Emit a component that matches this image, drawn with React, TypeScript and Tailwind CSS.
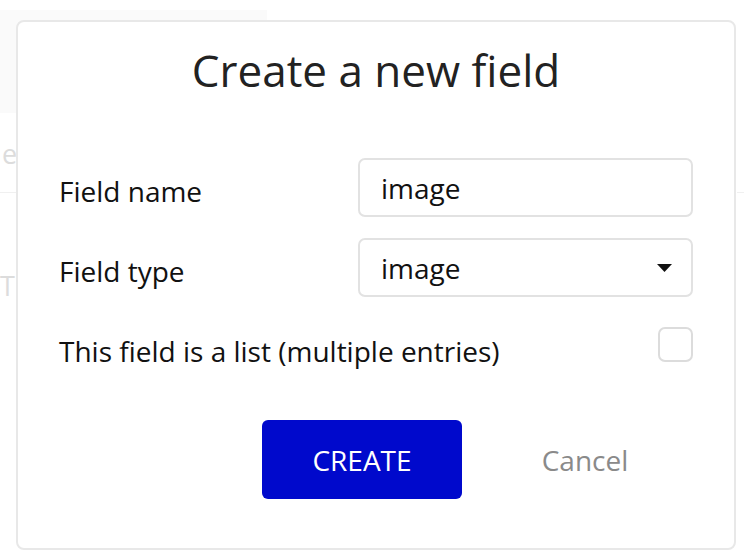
import React from "react";

export default function App() {
  return (
    <div className="relative w-[744px] h-[558px] overflow-hidden bg-white" style={{ fontFamily: '"Open Sans", sans-serif' }}>
      {/* faint background page */}
      <div className="absolute left-0 top-[10px] w-[267px] h-[103px] bg-[#fafafa]" />
      <div className="absolute left-[2px] top-[140px] text-[27px] leading-none text-[#dcdcdc]">e</div>
      <div className="absolute left-0 top-[192px] w-[16px] h-px bg-[#f0f0f0]" />
      <div className="absolute left-[737px] top-[192px] w-[8px] h-px bg-[#f0f0f0]" />
      <div className="absolute left-0 top-[272px] text-[27px] leading-none text-[#dcdcdc]">T</div>

      {/* dialog */}
      <div className="absolute left-[16px] top-[20px] w-[720px] h-[530px] rounded-[8px] border-2 border-[#e8e8e8] bg-white flex flex-col px-[41px]">
        <h1 className="pt-[26px] text-center text-[44px] leading-none text-[#222] font-normal">Create a new field</h1>

        <div className="mt-[66px] flex items-center justify-between h-[59px]">
          <span className="mt-[7px] text-[28px] leading-none text-[#111]">Field name</span>
          <div className="w-[335px] h-[59px] rounded-[7px] border-2 border-[#e2e2e2] flex items-center pl-[21px] text-[28px] leading-none text-[#111]">image</div>
        </div>

        <div className="mt-[21px] flex items-center justify-between h-[59px]">
          <span className="mt-[7px] text-[28px] leading-none text-[#111]">Field type</span>
          <div className="w-[335px] h-[59px] rounded-[7px] border-2 border-[#e2e2e2] flex items-center justify-between pl-[21px] pr-[19px] text-[28px] leading-none text-[#111]">
            <span>image</span>
            <svg width="15" height="8" viewBox="0 0 15 8"><path d="M0 0H15L7.5 8Z" fill="#111" /></svg>
          </div>
        </div>

        <div className="mt-[30px] flex items-center justify-between h-[35px]">
          <span className="mt-[13px] text-[28px] leading-none text-[#111]">This field is a list (multiple entries)</span>
          <div className="w-[35px] h-[35px] rounded-[7px] border-2 border-[#dcdcdc]" />
        </div>

        <div className="mt-[58px] flex items-center ml-[203px]">
          <button className="w-[200px] h-[79px] rounded-[6px] bg-[#0009CC] text-white text-[28px] leading-none">CREATE</button>
          <button className="w-[200px] h-[79px] ml-[23px] text-[#8a8a8a] text-[28px] leading-none">Cancel</button>
        </div>
      </div>
    </div>
  );
}
